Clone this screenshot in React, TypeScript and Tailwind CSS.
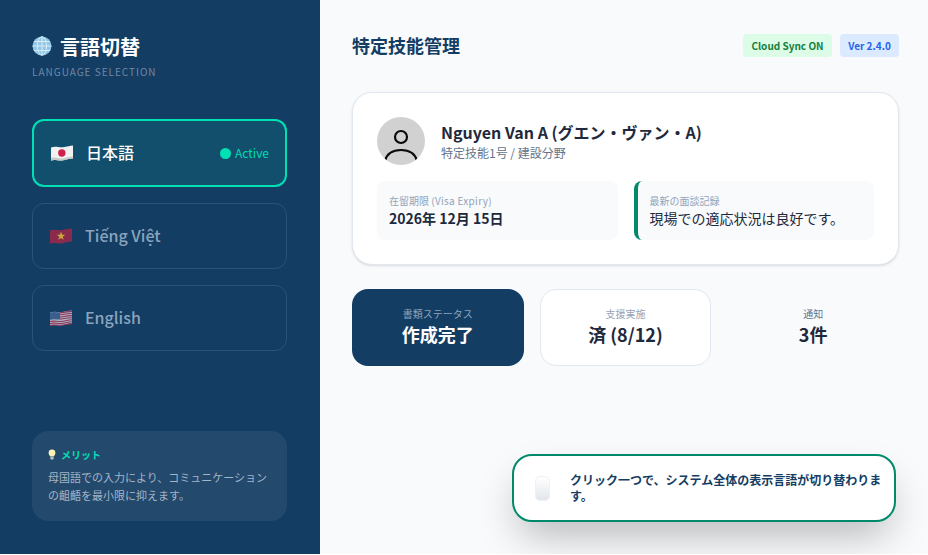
import React from "react";

const font = "font-['Noto_Sans_CJK_JP','Noto_Sans',sans-serif]";

function Globe() {
  return (
    <svg width="20" height="20" viewBox="0 0 20 20" className="shrink-0">
      <circle cx="10" cy="10" r="9.5" fill="#8fc8e8" />
      <g fill="none" stroke="#dcebf3" strokeWidth="1">
        <ellipse cx="10" cy="10" rx="4.5" ry="9.3" />
        <path d="M10 .5v19M.6 10h18.8M2 5.5h16M2 14.5h16" />
      </g>
    </svg>
  );
}

function FlagJapan() {
  return (
    <svg width="22" height="16" viewBox="0 0 22 16">
      <path d="M0 2.5C5 .5 8 3 12 2.2 16 1.5 19 .5 22 .4v13c-4 .2-7 1.4-11 2C7 16 4 14 0 15.5z" fill="#f1f1f1" />
      <path d="M0 13C5 11.500 8 14 11 13.400 15 12.800 19 11.800 22 11.500v2c-4 .2-7 1.400-11 2C7 16 4 14 0 15.500z" fill="#c9c9c9" />
      <circle cx="10.800" cy="8" r="3.700" fill="#cf1f4a" />
    </svg>
  );
}

function FlagVietnam() {
  return (
    <svg width="22" height="16" viewBox="0 0 22 16">
      <path d="M0 2.500C5 .8 8 2.800 12 2 16 1.300 19 .5 22 .4v13c-4 .2-7 1.400-11 2C7 16 4 14 0 15.500z" fill="#8a2a4c" />
      <path d="M11 3.600l1.100 3.100h3.200l-2.600 2 1 3.100-2.700-1.900-2.700 1.900 1-3.100-2.600-2h3.200z" fill="#c9a83e" />
    </svg>
  );
}

function FlagUsa() {
  return (
    <svg width="22" height="16" viewBox="0 0 22 16">
      <path d="M0 2.500C5 .8 8 2.800 12 2 16 1.300 19 .5 22 .4v13c-4 .2-7 1.400-11 2C7 16 4 14 0 15.500z" fill="#a9b4c6" />
      <g fill="none" stroke="#8f3658" strokeWidth="1.100">
        <path d="M10 2.900c4-.7 8-1.400 12-1.500M10 5c4-.6 8-1.400 12-1.500M10 7.100c4-.6 8-1.400 12-1.500M10 9.200c4-.6 8-1.400 12-1.500M0 11.500c4-1 7 .2 11 0 4-.5 7-1.500 11-1.700M0 13.500c4-1 7 .2 11 0 4-.5 7-1.500 11-1.700M0 15.300c4-1 7 .2 11 0 4-.5 7-1.500 11-1.700" />
      </g>
      <path d="M0 2.500C4 1.200 7 2.400 10 2.400v7.200c-3 0-6-1-10 .2z" fill="#3a5f8e" />
    </svg>
  );
}

function Avatar() {
  return (
    <svg width="48" height="48" viewBox="0 0 48 48" className="shrink-0">
      <defs>
        <clipPath id="avatar-clip">
          <circle cx="24" cy="24" r="24" />
        </clipPath>
      </defs>
      <circle cx="24" cy="24" r="24" fill="#d1d1d1" />
      <g clipPath="url(#avatar-clip)" fill="none" stroke="#0a0a0a" strokeWidth="2.200">
        <circle cx="24" cy="20" r="6" />
        <path d="M8 44c2-8 9-11 16-11s14 3 16 11" />
      </g>
    </svg>
  );
}

function Bulb() {
  return (
    <svg width="8" height="11" viewBox="0 0 8 11">
      <path d="M4 .5a3.400 3.400 0 0 1 3.400 3.400c0 1.500-1.200 2.300-1.500 3.600H2.100C1.800 6.200.6 5.400.6 3.900A3.400 3.400 0 0 1 4 .5z" fill="#fdf0b4" />
      <rect x="2.300" y="8" width="3.400" height="2.500" rx=".8" fill="#b9c2c9" />
    </svg>
  );
}

export default function App() {
  return (
    <div className={`${font} relative flex h-[554px] w-[928px] overflow-hidden bg-[#f8fafc]`}>
      <aside className="flex w-[320px] shrink-0 flex-col bg-[#143d63] pt-8 pr-[33px] pb-[33px] pl-8">
        <div className="flex h-[28px] items-center gap-2">
          <Globe />
          <h1 className="pt-[2px] text-[20px] leading-[28px] font-bold text-white">言語切替</h1>
        </div>
        <p className="mt-[4px] text-[10px] leading-[15px] tracking-[1px] text-[#6f88a3]">LANGUAGE SELECTION</p>

        <div className="mt-[40px] flex flex-col gap-4">
          <div className="flex h-[68px] items-center rounded-xl border-2 border-[#00e0b5] bg-[#124f6c] pr-[16px] pl-[17px]">
            <FlagJapan />
            <span className="ml-[13px] pb-[2px] text-[16px] font-medium text-white">日本語</span>
            <span className="ml-auto flex items-center gap-[4px] text-[12px] text-[#00dcb2]">
              <span className="h-[11px] w-[11px] rounded-full bg-[#00e0b5]" />
              Active
            </span>
          </div>
          <div className="flex h-[66px] items-center rounded-xl border border-[#2c5278] pl-[17px]">
            <FlagVietnam />
            <span className="ml-[13px] pb-[2px] text-[16px] font-medium text-[#8ba4be]">Tiếng Việt</span>
          </div>
          <div className="flex h-[66px] items-center rounded-xl border border-[#2c5278] pl-[17px]">
            <FlagUsa />
            <span className="ml-[13px] pb-[2px] text-[16px] font-medium text-[#8ba4be]">English</span>
          </div>
        </div>

        <div className="mt-auto rounded-2xl bg-[#23496d] px-4 pt-4 pb-[17px]">
          <div className="flex items-center gap-[5px] text-[10px] leading-[15px] font-bold text-[#00e0b5]">
            <Bulb />
            <span>メリット</span>
          </div>
          <p className="mt-[6px] text-[11px] leading-[18px] text-[#a4b5c6]">
            母国語での入力により、コミュニケーションの齟齬を最小限に抑えます。
          </p>
        </div>
      </aside>

      <main className="flex min-w-0 flex-1 flex-col pt-[30px] pr-[29px] pl-8">
        <header className="flex h-[30px] items-center justify-between">
          <h2 className="text-[18px] font-bold text-[#143d63]">特定技能管理</h2>
          <div className="flex gap-2">
            <span className="flex h-[23px] w-[89px] items-center justify-center rounded bg-[#dcfce7] text-[10px] font-semibold text-[#15803d]">
              Cloud Sync ON
            </span>
            <span className="flex h-[23px] w-[59px] items-center justify-center rounded bg-[#dbeafe] text-[10px] font-semibold text-[#2563eb]">
              Ver 2.4.0
            </span>
          </div>
        </header>

        <section className="mt-[32px] rounded-[20px] border border-[#e2e8f0] bg-white p-6 shadow-sm">
          <div className="flex items-center gap-4">
            <Avatar />
            <div>
              <p className="text-[16px] leading-[24px] font-semibold text-[#1e293b]">Nguyen Van A (グエン・ヴァン・A)</p>
              <p className="text-[12px] leading-[18px] text-[#64748b]">特定技能1号 / 建設分野</p>
            </div>
          </div>
          <div className="mt-4 grid grid-cols-2 gap-4">
            <div className="h-[59px] rounded-lg bg-[#f8fafc] px-3 pt-3">
              <p className="text-[10px] leading-[15px] text-[#94a3b8]">
                在留期限 <span className="tracking-[0.3px]">(Visa Expiry)</span>
              </p>
              <p className="text-[14px] leading-[20px] font-semibold text-[#1e293b]">2026年 12月 15日</p>
            </div>
            <div className="h-[59px] rounded-lg border-l-4 border-[#00896b] bg-[#f8fafc] pt-3 pl-3">
              <p className="text-[10px] leading-[15px] text-[#94a3b8]">最新の面談記録</p>
              <p className="text-[14px] leading-[20px] text-[#1e293b]">現場での適応状況は良好です。</p>
            </div>
          </div>
        </section>

        <section className="mt-6 grid grid-cols-3 gap-4">
          <div className="flex h-[77px] flex-col items-center justify-center rounded-2xl bg-[#143d63] pb-[3px]">
            <p className="text-[10px] leading-[15px] text-[#8ba4be]">書類ステータス</p>
            <p className="text-[18px] leading-[26px] font-bold text-white">作成完了</p>
          </div>
          <div className="flex h-[77px] flex-col items-center justify-center rounded-2xl border border-[#e2e8f0] bg-white pb-[2px]">
            <p className="text-[10px] leading-[15px] text-[#94a3b8]">支援実施</p>
            <p className="text-[18px] leading-[26px] font-bold text-[#1e293b]">済 (8/12)</p>
          </div>
          <div className="flex h-[77px] flex-col items-center justify-center rounded-2xl pb-[3px]">
            <p className="text-[10px] leading-[15px] text-[#64748b]">通知</p>
            <p className="text-[18px] leading-[26px] font-bold text-[#1e293b]">3件</p>
          </div>
        </section>
      </main>

      <div className="absolute top-[454px] left-[512px] flex h-[68px] w-[384px] items-center gap-[20px] rounded-[20px] border-2 border-[#00896b] bg-white pr-[12px] pl-[21px] shadow-[0_20px_40px_-8px_rgba(0,0,0,0.28)]">
        <span className="h-[25px] w-[15px] shrink-0 rounded-[5px] border border-[#eef1f5] bg-gradient-to-b from-white to-[#e2e6eb]" />
        <p className="text-[12px] leading-[16px] font-bold text-[#143d63]">
          クリック一つで、システム全体の表示言語が切り替わります。
        </p>
      </div>
    </div>
  );
}
